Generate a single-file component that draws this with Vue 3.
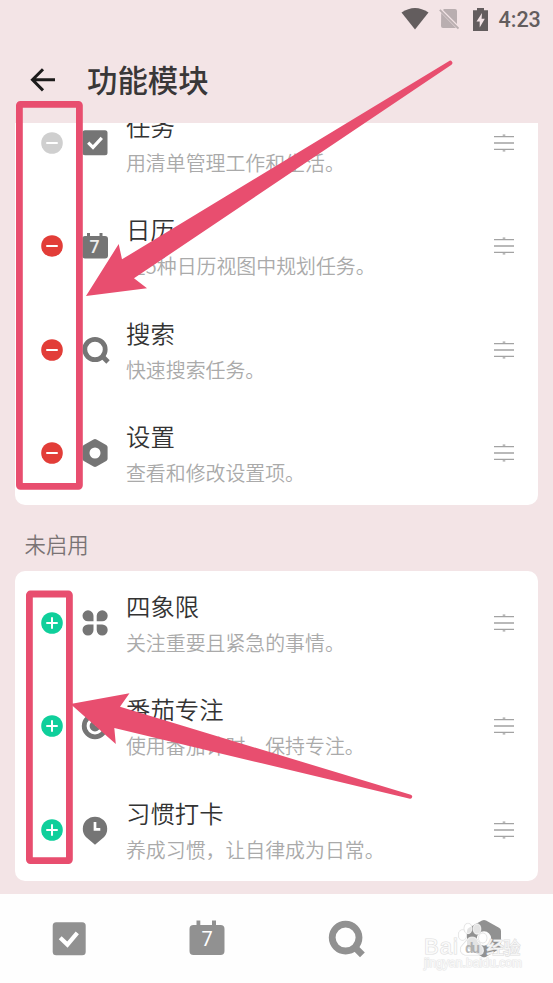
<script setup>
const enabled = [
  { icon: 'check', title: '任务', text: '用清单管理工作和生活。', locked: true },
  { icon: 'calendar', title: '日历', text: '在5种日历视图中规划任务。' },
  { icon: 'search', title: '搜索', text: '快速搜索任务。' },
  { icon: 'settings', title: '设置', text: '查看和修改设置项。' },
]
const disabled = [
  { icon: 'matrix', title: '四象限', text: '关注重要且紧急的事情。' },
  { icon: 'focus', title: '番茄专注', text: '使用番茄计时，保持专注。' },
  { icon: 'habit', title: '习惯打卡', text: '养成习惯，让自律成为日常。' },
]
const groups = [
  { name: 'enabled', items: enabled },
  { name: 'disabled', label: '未启用', items: disabled },
]
</script>

<template>
  <div class="page" lang="zh-CN">
    <div class="status">
      <svg class="wifi" viewBox="0 0 28 22"><path d="M0.5 4.5Q14-4.5 27.5 4.5L14 21.5Z" /></svg>
      <svg class="sim" viewBox="0 0 20 22">
        <path d="M5 1H16Q18 1 18 3V16L4 2ZM2.2 5L17 20H4Q2 20 2 18Z" />
        <path class="slash" d="M0.8 1.8L19.5 20.5" />
      </svg>
      <svg class="battery" viewBox="0 0 15 23">
        <path d="M4 0H11V2.3H15V23H0V2.3H4Z" />
        <path class="bolt" d="M9 5L3.5 13.5H6.7V19.5L11.8 10.8H8.6Z" />
      </svg>
      <span class="time">4:23</span>
    </div>

    <header class="header">
      <svg class="back" viewBox="0 0 26 26"><path d="M13 2.2L2.5 12.8L13 23.4M2.5 12.8H25" /></svg>
      <h1>功能模块</h1>
    </header>

    <main class="content">
      <template v-for="g in groups" :key="g.name">
        <div v-if="g.label" class="label">{{ g.label }}</div>
        <section class="card" :class="g.name">
          <div v-for="m in g.items" :key="m.icon" class="row">
            <svg class="toggle" :class="[g.name, { locked: m.locked }]" viewBox="0 0 22 22">
              <circle cx="11" cy="11" r="10.8" />
              <path d="M6 11H16" />
              <path v-if="g.name === 'disabled'" d="M11 6V16" />
            </svg>
            <svg class="icon" viewBox="0 0 30 30">
              <template v-if="m.icon === 'check'">
                <rect x="2.5" y="2.3" width="25" height="25" rx="2.5" />
                <path class="cut" d="M8.2 14.6L13 19.4L21.8 9.8" />
              </template>
              <template v-else-if="m.icon === 'calendar'">
                <path d="M7 2H10V5H19.5V2H22.5V5H25Q28 5 28 8V24.5Q28 27.5 25 27.5H5Q2.3 27.5 2.3 24.5V8Q2.3 5 5 5H7Z" />
                <text x="14.5" y="22.4">7</text>
              </template>
              <template v-else-if="m.icon === 'search'">
                <circle class="ring" cx="15" cy="14.5" r="10.2" />
                <path class="ring" d="M22 21L28 27" />
              </template>
              <path v-else-if="m.icon === 'settings'" fill-rule="evenodd" d="M13.5 1.5Q15 .6 16.5 1.5L26.2 6.9Q27.6 7.7 27.6 9.2V20.8Q27.6 22.3 26.2 23.1L16.5 28.5Q15 29.3 13.5 28.5L3.8 23.1Q2.4 22.3 2.4 20.8V9.2Q2.4 7.7 3.8 6.9ZM15 9.5A5.5 5.5 0 1 0 15 20.5A5.5 5.5 0 1 0 15 9.5Z" />
              <path v-else-if="m.icon === 'matrix'" d="M13.5 13.3H8A5.5 5.5 0 1 1 13.5 7.8ZM16.7 13.3V7.8A5.5 5.5 0 1 1 22.2 13.3ZM13.5 16.5V22A5.5 5.5 0 1 1 8 16.5ZM16.7 16.5H22.2A5.5 5.5 0 1 1 16.7 22Z" />
              <template v-else-if="m.icon === 'focus'">
                <circle class="ring" cx="15" cy="15" r="10.8" />
                <path d="M15 15V9.6A5.4 5.4 0 1 0 20.4 15Z" />
              </template>
              <template v-else>
                <path d="M15 29.7L5.9 22A12.2 12.2 0 1 1 24.1 22Z" />
                <path class="cut hand" d="M15 7V14.3H20.3" />
              </template>
            </svg>
            <div class="copy">
              <div class="title">{{ m.title }}</div>
              <div class="text">{{ m.text }}</div>
            </div>
            <svg class="drag" viewBox="0 0 20 18"><path d="M0 2.7H20M0 9H20M0 15.3H20M8.7 1.2H11.3M8.7 16.8H11.3" /></svg>
          </div>
        </section>
      </template>
    </main>

    <nav class="nav">
      <svg viewBox="0 0 40 40">
        <rect x="3.7" y="3.3" width="33" height="33" rx="3.5" />
        <path class="cut big" d="M11.2 18.8L18.4 25.6L28.3 13.8" />
      </svg>
      <svg viewBox="0 0 40 40">
        <path d="M9.5 1.5H13.3V6H25V1.5H29V6H33.5Q37.5 6 37.5 10V32Q37.5 36 33.5 36H6.5Q2.5 36 2.5 32V10Q2.5 6 6.5 6H9.5Z" />
        <text class="day" x="20" y="27.2">7</text>
      </svg>
      <svg viewBox="0 0 40 40">
        <circle class="navring" cx="19.6" cy="18.6" r="13.4" />
        <path class="navring" d="M28.9 28.3L36.4 35.8" />
      </svg>
      <svg viewBox="0 0 40 40">
        <path fill-rule="evenodd" d="M18 1.6Q20 .6 22 1.6L35 8.7Q37 9.8 37 12V27Q37 29.2 35 30.3L22 37.7Q20 38.8 18 37.7L5 30.3Q3 29.2 3 27V12Q3 9.8 5 8.7ZM20 12.3A7.2 7.2 0 1 0 20 26.7A7.2 7.2 0 1 0 20 12.3Z" />
      </svg>
    </nav>

    <svg class="overlay" viewBox="0 0 553 983">
      <g class="watermark">
        <ellipse cx="462.5" cy="935" rx="4" ry="5.2" />
        <ellipse cx="468" cy="928.5" rx="3.8" ry="5.2" />
        <ellipse cx="477" cy="929" rx="3.8" ry="5.2" />
        <ellipse cx="482.8" cy="938" rx="4" ry="4.8" />
        <path d="M472 937Q476 937 478 941L483 948Q485 955 478 955H465Q459 953 461 947L467 940Q469 937 472 937Z" />
        <text class="brand" x="424" y="953.5" textLength="34">Bai</text>
        <text class="du" x="465" y="952.5" textLength="15">du</text>
        <text class="brand cjk" x="486.5" y="953.5" textLength="34">经验</text>
        <text class="url" x="424" y="967" textLength="98">jingyan.baidu.com</text>
      </g>
      <g class="marks">
        <rect x="19.4" y="104.3" width="60" height="382" rx="1" />
        <rect x="29.4" y="594" width="40" height="266.6" rx="1" />
        <path d="M86 296L118.7 244L122 259.3L448.8 61.2A2.2 2.2 0 0 1 451.5 64.7L134 278.3L147 288.3Z" />
        <path d="M70.5 704L129.5 693.3L120 706.7L410.8 794.8A2 2 0 0 1 410 798.7L114.3 728L115.8 744Z" />
      </g>
    </svg>
  </div>
</template>

<style>
body { margin: 0; }
</style>

<style scoped>
.page {
  position: relative;
  display: flex;
  flex-direction: column;
  width: 553px;
  height: 983px;
  overflow: hidden;
  background: #f3e4e6;
  font-family: "Noto Sans CJK SC", sans-serif;
}
.status {
  display: flex;
  align-items: center;
  height: 38px;
  padding-left: 401px;
  fill: #635d5e;
}
.wifi { width: 28px; height: 22px; }
.sim { width: 20px; height: 22px; margin-left: 10px; fill: #b9aeb0; }
.slash { stroke: #b9aeb0; stroke-width: 1.8; }
.battery { width: 15px; height: 23px; margin-left: 13.5px; }
.bolt { fill: #f3e4e6; }
.time {
  margin-left: 11px;
  font-family: Roboto, sans-serif;
  font-size: 21.5px;
  font-weight: 500;
  color: #635d5e;
}
.header {
  display: flex;
  align-items: center;
  box-sizing: border-box;
  height: 85px;
  padding: 0 0 2px 30px;
}
.back {
  width: 26px;
  height: 26px;
  fill: none;
  stroke: #1c1b1b;
  stroke-width: 3;
}
h1 {
  margin: 0 0 0 31px;
  padding-bottom: 2px;
  font-size: 30.4px;
  line-height: 44px;
  font-weight: 500;
  color: #393738;
}
.content { flex: 1; overflow: hidden; padding: 0 15px; }
.card { background: #fff; border-radius: 10px; overflow: hidden; }
.card.enabled { margin-top: -31.7px; }
.label {
  height: 66.2px;
  padding: 12px 0 0 9.5px;
  box-sizing: border-box;
  font-size: 21.4px;
  line-height: 53px;
  font-weight: 350;
  color: #7a7374;
}
.row {
  display: flex;
  align-items: center;
  height: 103.4px;
  padding: 0 24px 0 26px;
}
.toggle { width: 22px; height: 22px; stroke: #fff; stroke-width: 2; stroke-linecap: round; }
.toggle circle { stroke: none; }
.toggle.enabled { fill: #e23d38; }
.toggle.disabled { fill: #0fcf9b; }
.toggle.locked { fill: #cfcfcf; }
.icon { width: 30px; height: 30px; margin-left: 17.3px; fill: #757575; overflow: visible; }
.icon text {
  font-family: Roboto, sans-serif;
  font-size: 17.7px;
  font-weight: 500;
  fill: #eee;
  text-anchor: middle;
}
.cut { fill: none; stroke: #fff; stroke-width: 3.2; }
.hand { stroke-width: 2.7; }
.ring { fill: none; stroke: #757575; stroke-width: 4.8; }
.copy { flex: 1; margin-left: 15.7px; white-space: nowrap; }
.title { font-size: 24.4px; line-height: 36px; color: #333; font-weight: 350; }
.text { font-size: 19.9px; line-height: 30px; padding-top: 4px; color: #aaa; font-weight: 350; }
.drag { width: 20px; height: 18px; fill: none; stroke: #a3a3a3; stroke-width: 1.3; }
.nav {
  display: flex;
  align-items: center;
  justify-content: space-around;
  height: 89px;
  background: #fefefe;
  fill: #919191;
}
.nav svg { width: 40px; height: 40px; }
.big { stroke-width: 4.2; }
.day { font-family: Roboto, sans-serif; font-size: 20px; fill: #fff; text-anchor: middle; }
.navring { fill: none; stroke: #919191; stroke-width: 6.8; }
.overlay { position: absolute; left: 0; top: 0; width: 553px; height: 983px; pointer-events: none; }
.marks { fill: #e84e6f; }
.marks rect { fill: none; stroke: #e84e6f; stroke-width: 6.8; stroke-linejoin: round; }
.watermark { fill: #fff; fill-opacity: .75; stroke: #dedede; stroke-width: 1.2; paint-order: stroke; }
.brand { font-family: "Liberation Sans", sans-serif; font-size: 22px; }
.brand.cjk { font-family: "Noto Sans CJK SC", sans-serif; font-size: 17.5px; }
.du { font-family: "Liberation Sans", sans-serif; font-size: 14px; font-weight: 700; fill: #a0a0a0; stroke: none; }
.url { font-family: "Liberation Sans", sans-serif; font-size: 12px; stroke: #e8e8e8; }
</style>
